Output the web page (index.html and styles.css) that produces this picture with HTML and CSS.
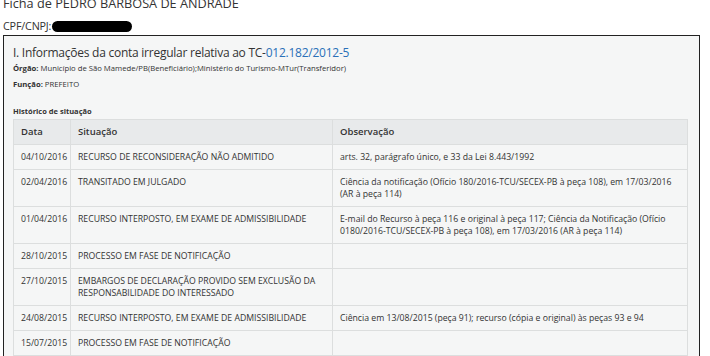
FILE: index.html
```html
<!DOCTYPE html>
<html lang="pt-BR">
<head>
<meta charset="utf-8">
<title>Ficha</title>
<link rel="stylesheet" href="styles.css">
</head>
<body>
<h1 class="page-title">Ficha de PEDRO BARBOSA DE ANDRADE</h1>
<div class="doc-line">CPF/CNPJ:<span class="redacted"></span></div>
<section class="panel">
  <h2 class="panel-title">I. Informações da conta irregular relativa ao TC-<a class="tc-link" href="#">012.182/2012-5</a></h2>
  <p class="meta meta-first"><b>Órgão:</b> Município de São Mamede/PB(Beneficiário);Ministério do Turismo-MTur(Transferidor)</p>
  <p class="meta"><b>Função:</b> PREFEITO</p>
  <h3 class="section-label">Histórico de situação</h3>
  <table class="history">
    <colgroup><col class="c-date"><col class="c-sit"><col class="c-obs"></colgroup>
    <thead>
      <tr><th>Data</th><th>Situação</th><th>Observação</th></tr>
    </thead>
    <tbody>
      <tr><td>04/10/2016</td><td>RECURSO DE RECONSIDERAÇÃO NÃO ADMITIDO</td><td>arts. 32, parágrafo único, e 33 da Lei 8.443/1992</td></tr>
      <tr><td>02/04/2016</td><td>TRANSITADO EM JULGADO</td><td>Ciência da notificação (Ofício 180/2016-TCU/SECEX-PB à peça 108), em 17/03/2016 (AR à peça 114)</td></tr>
      <tr><td>01/04/2016</td><td>RECURSO INTERPOSTO, EM EXAME DE ADMISSIBILIDADE</td><td>E-mail do Recurso à peça 116 e original à peça 117; Ciência da Notificação (Ofício 0180/2016-TCU/SECEX-PB à peça 108), em 17/03/2016 (AR à peça 114)</td></tr>
      <tr><td>28/10/2015</td><td>PROCESSO EM FASE DE NOTIFICAÇÃO</td><td></td></tr>
      <tr><td>27/10/2015</td><td>EMBARGOS DE DECLARAÇÃO PROVIDO SEM EXCLUSÃO DA RESPONSABILIDADE DO INTERESSADO</td><td></td></tr>
      <tr><td>24/08/2015</td><td>RECURSO INTERPOSTO, EM EXAME DE ADMISSIBILIDADE</td><td>Ciência em 13/08/2015 (peça 91); recurso (cópia e original) às peças 93 e 94</td></tr>
      <tr><td>15/07/2015</td><td>PROCESSO EM FASE DE NOTIFICAÇÃO</td><td></td></tr>
    </tbody>
  </table>
</section>
</body>
</html>
```
FILE: styles.css
```css
html, body { margin: 0; padding: 0; background: #fff; }
body {
  font-family: "Open Sans", "Noto Sans", sans-serif;
  color: #333;
  padding: 0 3px;
}
.page-title {
  font-size: 12.7px;
  font-weight: 400;
  line-height: 14px;
  margin: -4px 0 0 0;
  color: #333;
}
.doc-line {
  font-size: 10.8px;
  line-height: 12px;
  margin-top: 10px;
  display: flex;
  align-items: center;
  letter-spacing: -0.2px;
}
.redacted {
  display: inline-block;
  width: 80px;
  height: 11px;
  border-radius: 6px;
  background: #000;
  margin-left: 1px;
}
.panel {
  margin-top: 3px;
  border: 1px solid #222;
  border-bottom: none;
  background: #f5f6f6;
  padding: 9px 11px 0 9px;
  width: 675px;
  height: 400px;
}
.panel-title {
  font-size: 12px;
  font-weight: 400;
  line-height: 16px;
  margin: 0;
  letter-spacing: -0.25px;
}
.tc-link { color: #2a70b8; text-decoration: none; }
.meta {
  font-size: 7.7px;
  line-height: 10px;
  margin: 6px 0 0 0;
  color: #333;
}
.meta-first { margin-top: 2px; }
.meta b { font-weight: 700; }
.section-label {
  font-size: 7.5px;
  font-weight: 700;
  line-height: 10px;
  margin: 17px 0 3px 0;
}
.history {
  width: 675px;
  border-collapse: collapse;
  font-size: 8.7px;
  table-layout: fixed;
}
.c-date { width: 57px; }
.c-sit { width: 262px; }
.history th, .history td {
  border: 1px solid #dcdede;
  padding: 6px 6px 6px 7px;
  text-align: left;
  vertical-align: top;
  line-height: 12px;
}
.history th {
  background: #e8eaeb;
  font-weight: 600;
  font-size: 9.5px;
}
```
